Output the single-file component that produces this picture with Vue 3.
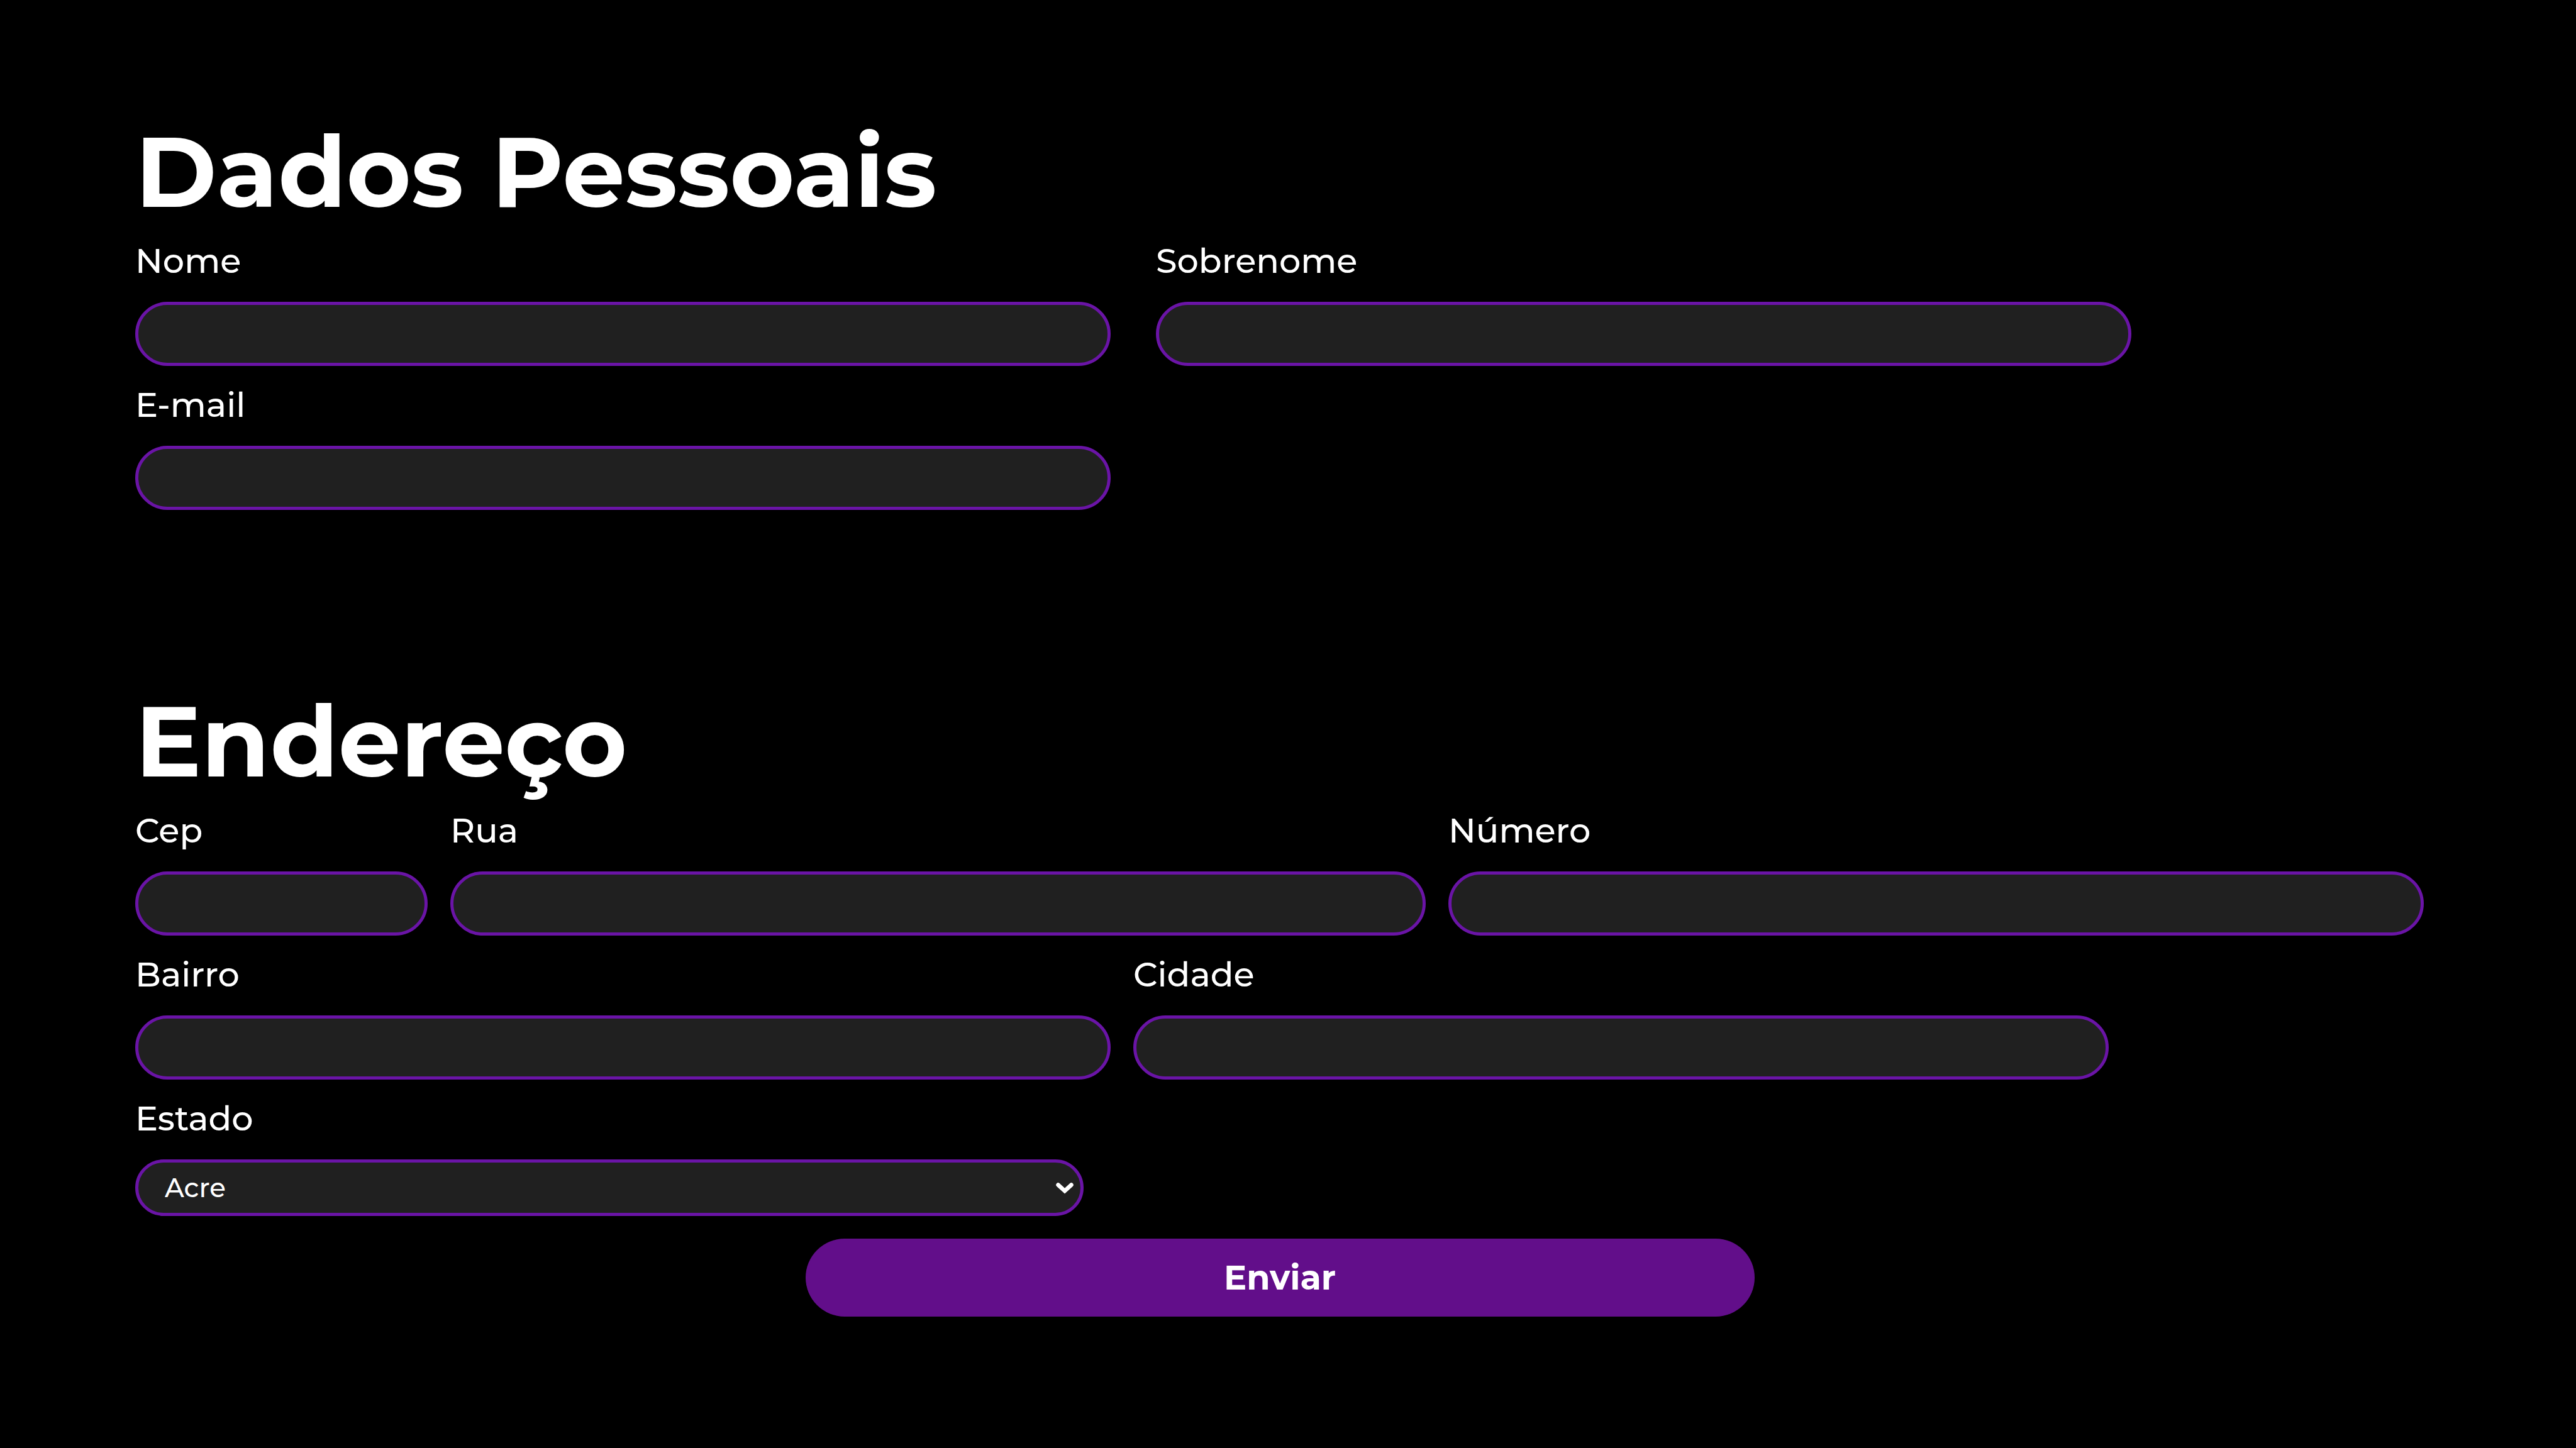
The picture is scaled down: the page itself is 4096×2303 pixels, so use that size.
<script setup>
import { reactive } from 'vue'

const sections = [
  {
    title: 'Dados Pessoais',
    wide: true,
    rows: [
      [
        { id: 'nome', label: 'Nome', type: 'text' },
        { id: 'sobrenome', label: 'Sobrenome', type: 'text' },
      ],
      [{ id: 'email', label: 'E-mail', type: 'email' }],
    ],
  },
  {
    title: 'Endereço',
    rows: [
      [
        { id: 'cep', label: 'Cep', type: 'text', size: 'short' },
        { id: 'rua', label: 'Rua', type: 'text' },
        { id: 'numero', label: 'Número', type: 'text' },
      ],
      [
        { id: 'bairro', label: 'Bairro', type: 'text' },
        { id: 'cidade', label: 'Cidade', type: 'text' },
      ],
      [{ id: 'estado', label: 'Estado', type: 'select', size: 'medium' }],
    ],
  },
]

const estados = [
  'Acre', 'Alagoas', 'Amapá', 'Amazonas', 'Bahia', 'Ceará', 'Distrito Federal',
  'Espírito Santo', 'Goiás', 'Maranhão', 'Mato Grosso', 'Mato Grosso do Sul',
  'Minas Gerais', 'Pará', 'Paraíba', 'Paraná', 'Pernambuco', 'Piauí',
  'Rio de Janeiro', 'Rio Grande do Norte', 'Rio Grande do Sul', 'Rondônia',
  'Roraima', 'Santa Catarina', 'São Paulo', 'Sergipe', 'Tocantins',
]

const form = reactive({
  nome: '', sobrenome: '', email: '', cep: '', rua: '', numero: '',
  bairro: '', cidade: '', estado: 'Acre',
})
</script>

<template>
  <form class="form" @submit.prevent>
    <section v-for="section in sections" :key="section.title" class="section">
      <h1 class="title">{{ section.title }}</h1>
      <div class="rows">
        <div
          v-for="(row, i) in section.rows"
          :key="i"
          class="row"
          :class="{ 'row-wide': section.wide }"
        >
          <div v-for="field in row" :key="field.id" class="field" :class="field.size">
            <label class="label" :for="field.id">{{ field.label }}</label>
            <div v-if="field.type === 'select'" class="select-wrap">
              <select :id="field.id" v-model="form[field.id]" class="control select">
                <option v-for="uf in estados" :key="uf">{{ uf }}</option>
              </select>
              <svg class="chevron" viewBox="0 0 28 18" aria-hidden="true">
                <path d="M3.5 3.5 L14 13.2 L24.5 3.5" />
              </svg>
            </div>
            <input
              v-else
              :id="field.id"
              v-model="form[field.id]"
              class="control input"
              :type="field.type"
            />
          </div>
        </div>
      </div>
    </section>
    <button class="submit" type="submit">Enviar</button>
  </form>
</template>

<style>
body {
  margin: 0;
  background: #000;
}
</style>

<style scoped>
.form {
  display: flex;
  flex-direction: column;
  padding: 177px 241px 208px 215px;
  color: #fff;
  font-family: Montserrat, Inter, sans-serif;
}

.section + .section {
  margin-top: 272px;
}

.title {
  margin: 0 0 20px;
  font-size: 157px;
  font-weight: 700;
  line-height: 192px;
}

.rows {
  display: flex;
  flex-direction: column;
  gap: 36px;
}

.row {
  display: flex;
  gap: 36px;
}

.row-wide {
  gap: 72px;
}

.field {
  display: flex;
  flex: 0 1 1551px;
  flex-direction: column;
  gap: 38px;
  min-width: 0;
}

.field.short {
  flex-basis: 465px;
}

.field.medium {
  flex-basis: 1508px;
}

.label {
  font-size: 54px;
  font-weight: 500;
  line-height: 53px;
}

.control {
  box-sizing: border-box;
  width: 100%;
  border: 5px solid #6a14a6;
  border-radius: 52px;
  background: #202020;
  color: #fff;
  font-family: inherit;
  font-size: 42px;
  font-weight: 500;
  outline: none;
}

.input {
  height: 102px;
  padding: 0 40px;
}

.select-wrap {
  position: relative;
}

.select {
  display: block;
  height: 90px;
  padding: 0 60px 0 42px;
  appearance: none;
}

.chevron {
  position: absolute;
  top: 37px;
  right: 16px;
  width: 28px;
  height: 18px;
  fill: none;
  stroke: #fff;
  stroke-width: 6.5;
  stroke-linecap: round;
  pointer-events: none;
}

.submit {
  align-self: center;
  width: 1509px;
  max-width: 100%;
  height: 124px;
  margin-top: 36px;
  padding: 0;
  border: 0;
  border-radius: 62px;
  background: #620e8a;
  color: #fff;
  font-family: inherit;
  font-size: 54px;
  font-weight: 700;
}
</style>
